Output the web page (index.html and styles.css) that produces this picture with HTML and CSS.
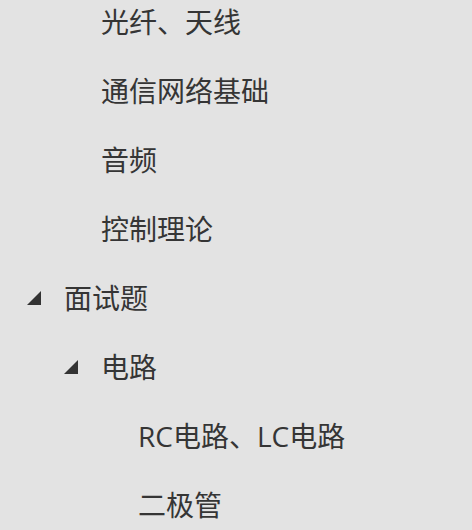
FILE: index.html
```html
<!DOCTYPE html>
<html lang="zh-CN">
<head>
<meta charset="utf-8">
<link rel="stylesheet" href="styles.css">
</head>
<body>
<ul class="tree">
  <li class="row lvl2"><span class="exp"></span><span class="label">光纤、天线</span></li>
  <li class="row lvl2"><span class="exp"></span><span class="label">通信网络基础</span></li>
  <li class="row lvl2"><span class="exp"></span><span class="label">音频</span></li>
  <li class="row lvl2"><span class="exp"></span><span class="label">控制理论</span></li>
  <li class="row lvl1"><span class="exp open"></span><span class="label">面试题</span></li>
  <li class="row lvl2"><span class="exp open"></span><span class="label">电路</span></li>
  <li class="row lvl3"><span class="exp"></span><span class="label">RC电路、LC电路</span></li>
  <li class="row lvl3"><span class="exp"></span><span class="label">二极管</span></li>
</ul>
</body>
</html>
```
FILE: styles.css
```css
html, body {
  margin: 0;
  padding: 0;
  background: #e3e3e3;
}
body {
  width: 472px;
  height: 530px;
  overflow: hidden;
  font-family: "Open Sans", "Noto Sans CJK SC", sans-serif;
  color: #353535;
}
.tree {
  list-style: none;
  margin: -13px 0 0 0;
  padding: 0;
}
.row {
  display: flex;
  align-items: center;
  height: 69px;
  font-size: 28px;
  white-space: nowrap;
}
.lvl1 { padding-left: 27px; }
.lvl2 { padding-left: 64px; }
.lvl3 { padding-left: 101px; }
.exp {
  flex: 0 0 37px;
  height: 15px;
  display: flex;
  align-items: center;
}
.exp.open::before {
  content: "";
  display: block;
  width: 0;
  height: 0;
  border-style: solid;
  border-width: 0 0 14px 14px;
  border-color: transparent transparent #333 transparent;
  margin-top: 1px;
}
.label {
  line-height: 1;
  font-weight: 400;
}
```
